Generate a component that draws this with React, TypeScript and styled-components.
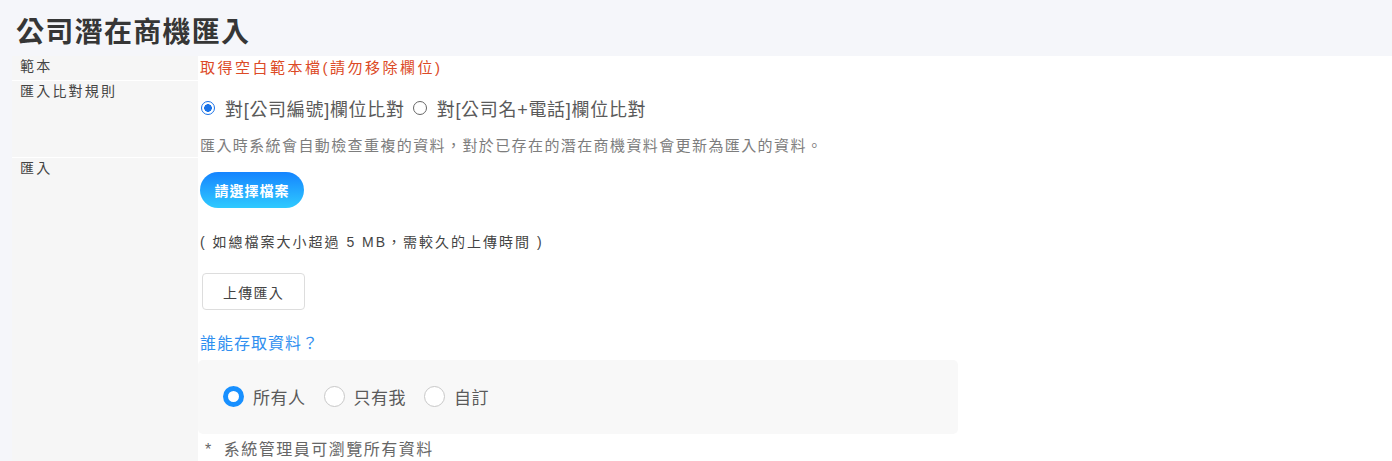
import * as React from "react"
import styled, { createGlobalStyle } from 'styled-components';

const GlobalStyle = createGlobalStyle`
    html, body {
        margin: 0;
        padding: 0;
        background: #f5f6fa;
    }
    body {
        font-family: "Liberation Sans", "Noto Sans CJK TC", sans-serif;
        color: #333;
        overflow: hidden;
    }
`;

const ruleOptions = ['對[公司編號]欄位比對', '對[公司名+電話]欄位比對'];
const accessOptions = ['所有人', '只有我', '自訂'];

export default function App() {
    const [rule, setRule] = React.useState(0);
    const [access, setAccess] = React.useState(0);

    return (
        <Page>
            <GlobalStyle />
            <Title>公司潛在商機匯入</Title>
            <Table>
                <Label>範本</Label>
                <Cell>
                    <TemplateLink>取得空白範本檔(請勿移除欄位)</TemplateLink>
                </Cell>

                <Label>匯入比對規則</Label>
                <Cell padTop={14}>
                    <RuleRow>
                        {ruleOptions.map((text, i) => (
                            <RuleOption key={text} onClick={() => setRule(i)}>
                                <SmallRadio checked={rule === i} />
                                {text}
                            </RuleOption>
                        ))}
                    </RuleRow>
                    <Hint>匯入時系統會自動檢查重複的資料，對於已存在的潛在商機資料會更新為匯入的資料。</Hint>
                </Cell>

                <Label last>匯入</Label>
                <Cell padTop={14}>
                    <PickButton>請選擇檔案</PickButton>
                    <SizeNote>( 如總檔案大小超過 5 MB，需較久的上傳時間 )</SizeNote>
                    <UploadButton>上傳匯入</UploadButton>
                    <WhoTitle>誰能存取資料？</WhoTitle>
                    <AccessBox>
                        {accessOptions.map((text, i) => (
                            <AccessOption key={text} onClick={() => setAccess(i)}>
                                <BigRadio checked={access === i} />
                                {text}
                            </AccessOption>
                        ))}
                    </AccessBox>
                    <Footnote><Star>*</Star>系統管理員可瀏覽所有資料</Footnote>
                </Cell>
            </Table>
        </Page>
    );
}

const Page = styled.div`
    height: 461px;
    display: flex;
    flex-direction: column;
`;

const Title = styled.h1`
    margin: 0;
    height: 56px;
    padding: 15px 0 0 16px;
    box-sizing: border-box;
    font-size: 28px;
    line-height: 36px;
    font-weight: 700;
    letter-spacing: 1.3px;
    color: #363636;
`;

const Table = styled.div`
    flex: 1;
    margin-left: 12px;
    display: grid;
    grid-template-columns: 186px 1fr;
    grid-template-rows: 25px 77px 1fr;
    background: #fff;
`;

const Label = styled.div<{ last?: boolean }>`
    background: #f6f6f6;
    border-bottom: ${p => (p.last ? 'none' : '1px solid #fff')};
    padding: 0 8px;
    font-size: 14px;
    line-height: 20px;
    letter-spacing: 2.2px;
    color: #444;
`;

const Cell = styled.div<{ padTop?: number }>`
    padding: ${p => p.padTop || 0}px 0 0 2px;
    display: flex;
    flex-direction: column;
    align-items: flex-start;
`;

const TemplateLink = styled.a`
    font-size: 15px;
    line-height: 24px;
    letter-spacing: 2.5px;
    color: #dc4a26;
    cursor: pointer;
`;

const RuleRow = styled.div`
    display: flex;
    align-items: center;
    gap: 7px;
    height: 26px;
`;

const RuleOption = styled.label`
    display: flex;
    align-items: center;
    gap: 10px;
    font-size: 18px;
    letter-spacing: 0.7px;
    color: #5a5a5a;
    cursor: pointer;
`;

const SmallRadio = styled.span<{ checked: boolean }>`
    width: 14px;
    height: 14px;
    box-sizing: border-box;
    border-radius: 50%;
    margin-left: 1px;
    border: 1.5px solid ${p => (p.checked ? '#1a73e8' : '#666')};
    background: ${p => (p.checked ? 'radial-gradient(circle, #1a73e8 0 3.6px, #fff 4px)' : '#fff')};
`;

const Hint = styled.div`
    margin-top: 15px;
    font-size: 15px;
    line-height: 20px;
    letter-spacing: 1.4px;
    color: #7d7d7d;
`;

const PickButton = styled.button`
    width: 104px;
    height: 36px;
    border: none;
    border-radius: 18px;
    background: linear-gradient(to bottom, #1584ff, #2fcaff);
    color: #fff;
    font-family: inherit;
    font-size: 14px;
    font-weight: 700;
    letter-spacing: 1px;
    padding: 0;
    cursor: pointer;
`;

const SizeNote = styled.div`
    margin-top: 24px;
    font-size: 14px;
    line-height: 20px;
    letter-spacing: 2px;
    color: #444;
`;

const UploadButton = styled.button`
    margin: 21px 0 0 2px;
    width: 103px;
    height: 37px;
    border: 1px solid #ddd;
    border-radius: 4px;
    background: #fff;
    color: #444;
    font-family: inherit;
    font-size: 14px;
    letter-spacing: 1.3px;
    padding: 0;
    cursor: pointer;
`;

const WhoTitle = styled.div`
    margin-top: 24px;
    font-size: 16px;
    line-height: 20px;
    letter-spacing: 1px;
    color: #2f8ff0;
`;

const AccessBox = styled.div`
    margin: 6px 0 0 -2px;
    width: 760px;
    height: 74px;
    box-sizing: border-box;
    padding: 0 0 2px 25px;
    background: #f8f8f8;
    border-radius: 5px;
    display: flex;
    align-items: center;
    gap: 18px;
`;

const AccessOption = styled.label`
    display: flex;
    align-items: center;
    gap: 9px;
    font-size: 17px;
    letter-spacing: 0.5px;
    color: #5a5a5a;
    cursor: pointer;
`;

const BigRadio = styled.span<{ checked: boolean }>`
    width: 21px;
    height: 21px;
    box-sizing: border-box;
    border-radius: 50%;
    background: #fff;
    border: ${p => (p.checked ? '5px solid #1890ff' : '1px solid #c8c8c8')};
`;

const Footnote = styled.div`
    margin: 6px 0 0 5px;
    font-size: 16px;
    line-height: 20px;
    letter-spacing: 1.5px;
    color: #666;
`;

const Star = styled.span`
    margin-right: 11px;
`;
